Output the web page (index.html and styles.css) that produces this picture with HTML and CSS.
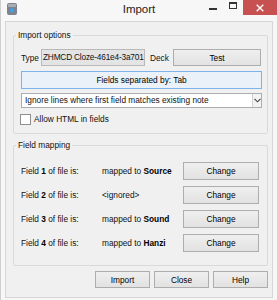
FILE: index.html
```html
<!DOCTYPE html>
<html>
  <head>
    <title>Import</title>
    <link rel="stylesheet" href="styles.css">
  </head>
  <body>
    <div class="window">
      <!-- Title bar -->
      <div class="titlebar">
        <div class="tb-left">
          <svg class="app-icon" width="10" height="12" viewBox="0 0 10 12">
            <rect x="0" y="0" width="10" height="12" rx="2" fill="#7d838d" />
            <rect x="1" y="1" width="8" height="3" rx="1" fill="#a9aeb6" />
            <polygon points="5,4.2 5.9,6.2 8,6.4 6.4,7.7 6.9,9.8 5,8.7 3.1,9.8 3.6,7.7 2,6.4 4.1,6.2" fill="#3aa6f0" />
          </svg>
        </div>
        <div class="tb-title">Import</div>
        <div class="tb-controls">
          <span class="ctl"><span class="min-glyph"></span></span>
          <span class="ctl"><span class="max-glyph"></span></span>
          <span class="ctl close">
            <svg width="8" height="8" viewBox="0 0 8 8">
              <path d="M0.7 0.7 L7.3 7.3 M7.3 0.7 L0.7 7.3" stroke="#fff" stroke-width="1.4" />
            </svg>
          </span>
        </div>
      </div>

      <!-- Dialog body -->
      <div class="client">
        <fieldset class="group options">
          <legend>Import options</legend>
          <div class="type-row">
            <span class="lbl">Type</span>
            <div class="combo combo-disabled">ZHMCD Cloze-461e4-3a701</div>
            <span class="lbl deck">Deck</span>
            <button class="btn">Test</button>
          </div>
          <button class="btn btn-focus wide">Fields separated by: Tab</button>
          <div class="select">
            <span class="select-text">Ignore lines where first field matches existing note</span>
            <span class="select-arrow">
              <svg width="7" height="5" viewBox="0 0 7 5">
                <polyline points="0.5,0.8 3.5,3.8 6.5,0.8" fill="none" stroke="#444" stroke-width="1.1" />
              </svg>
            </span>
          </div>
          <label class="check"><span class="box"></span>Allow HTML in fields</label>
        </fieldset>

        <fieldset class="group mapping">
          <legend>Field mapping</legend>
          <div class="map-grid">
            <span class="lbl">Field <b>1</b> of file is:</span>
            <span class="lbl">mapped to <b>Source</b></span>
            <button class="btn">Change</button>

            <span class="lbl">Field <b>2</b> of file is:</span>
            <span class="lbl">&lt;ignored&gt;</span>
            <button class="btn">Change</button>

            <span class="lbl">Field <b>3</b> of file is:</span>
            <span class="lbl">mapped to <b>Sound</b></span>
            <button class="btn">Change</button>

            <span class="lbl">Field <b>4</b> of file is:</span>
            <span class="lbl">mapped to <b>Hanzi</b></span>
            <button class="btn">Change</button>
          </div>
        </fieldset>

        <div class="actions">
          <button class="btn action">Import</button>
          <button class="btn action">Close</button>
          <button class="btn action">Help</button>
        </div>
      </div>
    </div>
  </body>
</html>
```

FILE: styles.css
```css
* {
  box-sizing: border-box;
}
body {
  margin: 0;
  font-family: "Liberation Sans", Arial, sans-serif;
  font-size: 8.3px;
  color: #111;
  background: #f7f7f7;
}
.window {
  width: 277px;
  height: 300px;
  display: flex;
  flex-direction: column;
  background: #f7f7f7;
  border-left: 1px solid #cfcfcf;
}

/* title bar */
.titlebar {
  height: 21px;
  flex: none;
  display: grid;
  grid-template-columns: 1fr auto 1fr;
  align-items: start;
}
.tb-left {
  padding: 3px 0 0 6px;
}
.app-icon {
  display: block;
}
.tb-title {
  font-size: 11.5px;
  line-height: 18px;
  color: #222;
}
.tb-controls {
  display: flex;
  justify-content: flex-end;
}
.ctl {
  width: 20px;
  height: 15px;
  display: flex;
  justify-content: center;
  align-items: flex-start;
}
.min-glyph {
  width: 8px;
  height: 2px;
  margin-top: 8px;
  background: #333;
}
.max-glyph {
  width: 8px;
  height: 7px;
  margin-top: 2px;
  border: 1px solid #333;
  border-top-width: 2px;
}
.ctl.close {
  width: 34px;
  background: #c75050;
  align-items: center;
}
.ctl.close svg {
  display: block;
}

/* client area */
.client {
  flex: 1;
  margin: 0 4px 2px 4px;
  background: #f0f0f0;
  border: 1px solid #d6d6d6;
  padding: 8px 4px 0 7px;
}
.group {
  margin: 0;
  min-width: 0;
  border: 1px solid #d9d9d9;
  border-radius: 2px;
  padding: 9px 5px 8px 7px;
}
.group legend {
  padding: 0 2px;
  margin-left: -5px;
  line-height: 10px;
}
.mapping {
  margin-top: 6px;
  padding: 12px 6px 13px 7px;
}
.lbl {
  white-space: nowrap;
}
b {
  font-weight: bold;
  color: #000;
}

/* buttons and inputs */
.btn {
  font: inherit;
  color: #000;
  padding: 0;
  margin: 0;
  height: 18px;
  border: 1px solid #adadad;
  background: linear-gradient(#efefef, #e2e2e2);
}
.btn-focus {
  border-color: #7eb4ea;
  background: #eaf1f8;
}
.type-row {
  display: grid;
  grid-template-columns: 20px 104px 28px 88px;
  height: 17px;
  align-items: center;
}
.type-row .btn {
  height: 17px;
}
.combo {
  height: 17px;
  line-height: 15px;
  padding-left: 2px;
  white-space: nowrap;
  overflow: hidden;
}
.combo-disabled {
  background: #e4e4e4;
  border: 1px solid #b9b9b9;
  letter-spacing: -0.2px;
  padding-left: 1px;
}
.deck {
  padding-left: 5px;
}
.wide {
  display: block;
  width: 100%;
  margin-top: 5px;
}
.select {
  margin-top: 4px;
  height: 15px;
  display: flex;
  background: #fff;
  border: 1px solid #abadb3;
}
.select-text {
  flex: 1;
  line-height: 13px;
  padding-left: 3px;
  white-space: nowrap;
  overflow: hidden;
}
.select-arrow {
  width: 9px;
  display: flex;
  align-items: center;
  justify-content: center;
  border-left: 1px solid #d0d0d0;
  background: #f3f3f3;
}
.check {
  display: flex;
  align-items: center;
  height: 12px;
  margin-top: 5px;
}
.box {
  width: 11px;
  height: 11px;
  margin-left: -1px;
  margin-right: 3px;
  background: #fff;
  border: 1px solid #8f8f8f;
}

/* field mapping */
.map-grid {
  display: grid;
  grid-template-columns: 81px 81px 76px;
  grid-auto-rows: 18px;
  row-gap: 6px;
  align-items: center;
}

.actions {
  display: flex;
  justify-content: flex-end;
  gap: 4px;
  margin-top: 5px;
}
.action {
  width: 55px;
  height: 17px;
}
```
